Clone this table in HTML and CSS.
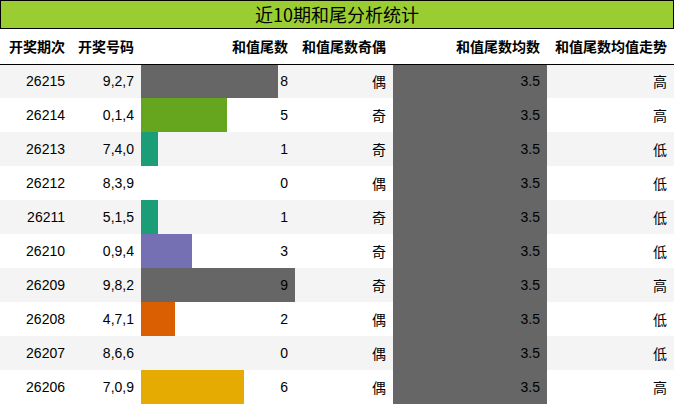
FILE: index.html
```html
<!DOCTYPE html>
<html lang="zh">
<head>
<meta charset="utf-8">
<link rel="stylesheet" href="styles.css">
</head>
<body>
<div class="title">近10期和尾分析统计</div>
<table class="stats">
  <colgroup>
    <col class="c1"><col class="c2"><col class="c3"><col class="c4"><col class="c5"><col class="c6">
  </colgroup>
  <thead>
    <tr><th>开奖期次</th><th>开奖号码</th><th>和值尾数</th><th>和值尾数奇偶</th><th>和值尾数均数</th><th>和值尾数均值走势</th></tr>
  </thead>
  <tbody>
    <tr><td>26215</td><td>9,2,7</td><td style="background:linear-gradient(90deg,#666666 88.9%,transparent 88.9%)">8</td><td>偶</td><td class="avg">3.5</td><td>高</td></tr>
    <tr><td>26214</td><td>0,1,4</td><td style="background:linear-gradient(90deg,#66a61e 55.6%,transparent 55.6%)">5</td><td>奇</td><td class="avg">3.5</td><td>高</td></tr>
    <tr><td>26213</td><td>7,4,0</td><td style="background:linear-gradient(90deg,#1b9e77 11.1%,transparent 11.1%)">1</td><td>奇</td><td class="avg">3.5</td><td>低</td></tr>
    <tr><td>26212</td><td>8,3,9</td><td>0</td><td>偶</td><td class="avg">3.5</td><td>低</td></tr>
    <tr><td>26211</td><td>5,1,5</td><td style="background:linear-gradient(90deg,#1b9e77 11.1%,transparent 11.1%)">1</td><td>奇</td><td class="avg">3.5</td><td>低</td></tr>
    <tr><td>26210</td><td>0,9,4</td><td style="background:linear-gradient(90deg,#7570b3 33.3%,transparent 33.3%)">3</td><td>奇</td><td class="avg">3.5</td><td>低</td></tr>
    <tr><td>26209</td><td>9,8,2</td><td style="background:linear-gradient(90deg,#666666 100%,transparent 100%)">9</td><td>奇</td><td class="avg">3.5</td><td>高</td></tr>
    <tr><td>26208</td><td>4,7,1</td><td style="background:linear-gradient(90deg,#d95f02 22.2%,transparent 22.2%)">2</td><td>偶</td><td class="avg">3.5</td><td>低</td></tr>
    <tr><td>26207</td><td>8,6,6</td><td>0</td><td>偶</td><td class="avg">3.5</td><td>低</td></tr>
    <tr><td>26206</td><td>7,0,9</td><td style="background:linear-gradient(90deg,#e6ab02 66.7%,transparent 66.7%)">6</td><td>偶</td><td class="avg">3.5</td><td>高</td></tr>
  </tbody>
</table>
</body>
</html>
```
FILE: styles.css
```css
html, body {
  margin: 0;
  padding: 0;
  background: #ffffff;
}
body {
  width: 674px;
  font-family: "Liberation Sans", "Noto Sans CJK SC", sans-serif;
  color: #000;
}
.title {
  box-sizing: border-box;
  height: 29px;
  border: 1px solid #000;
  background: #9acd32;
  font-family: "Noto Sans CJK SC", sans-serif;
  font-size: 18px;
  line-height: 26px;
  text-align: center;
}
.stats {
  width: 674px;
  border-collapse: collapse;
  table-layout: fixed;
  border-spacing: 0;
}
.c1 { width: 72px; }
.c2 { width: 69px; }
.c3 { width: 154px; }
.c4 { width: 98px; }
.c5 { width: 154px; }
.c6 { width: 127px; }
.stats th {
  height: 35px;
  padding: 0 7px 0 0;
  box-sizing: border-box;
  font-family: "Noto Sans CJK SC", sans-serif;
  font-weight: bold;
  font-size: 14px;
  text-align: right;
  white-space: nowrap;
  border-bottom: 1px solid #000;
}
.stats td {
  height: 34px;
  padding: 0 7px 0 0;
  box-sizing: border-box;
  font-size: 14px;
  text-align: right;
  white-space: nowrap;
}
.stats tbody tr:nth-child(odd) {
  background: #f4f4f4;
}
.stats td.avg {
  background: #666666;
}
```
